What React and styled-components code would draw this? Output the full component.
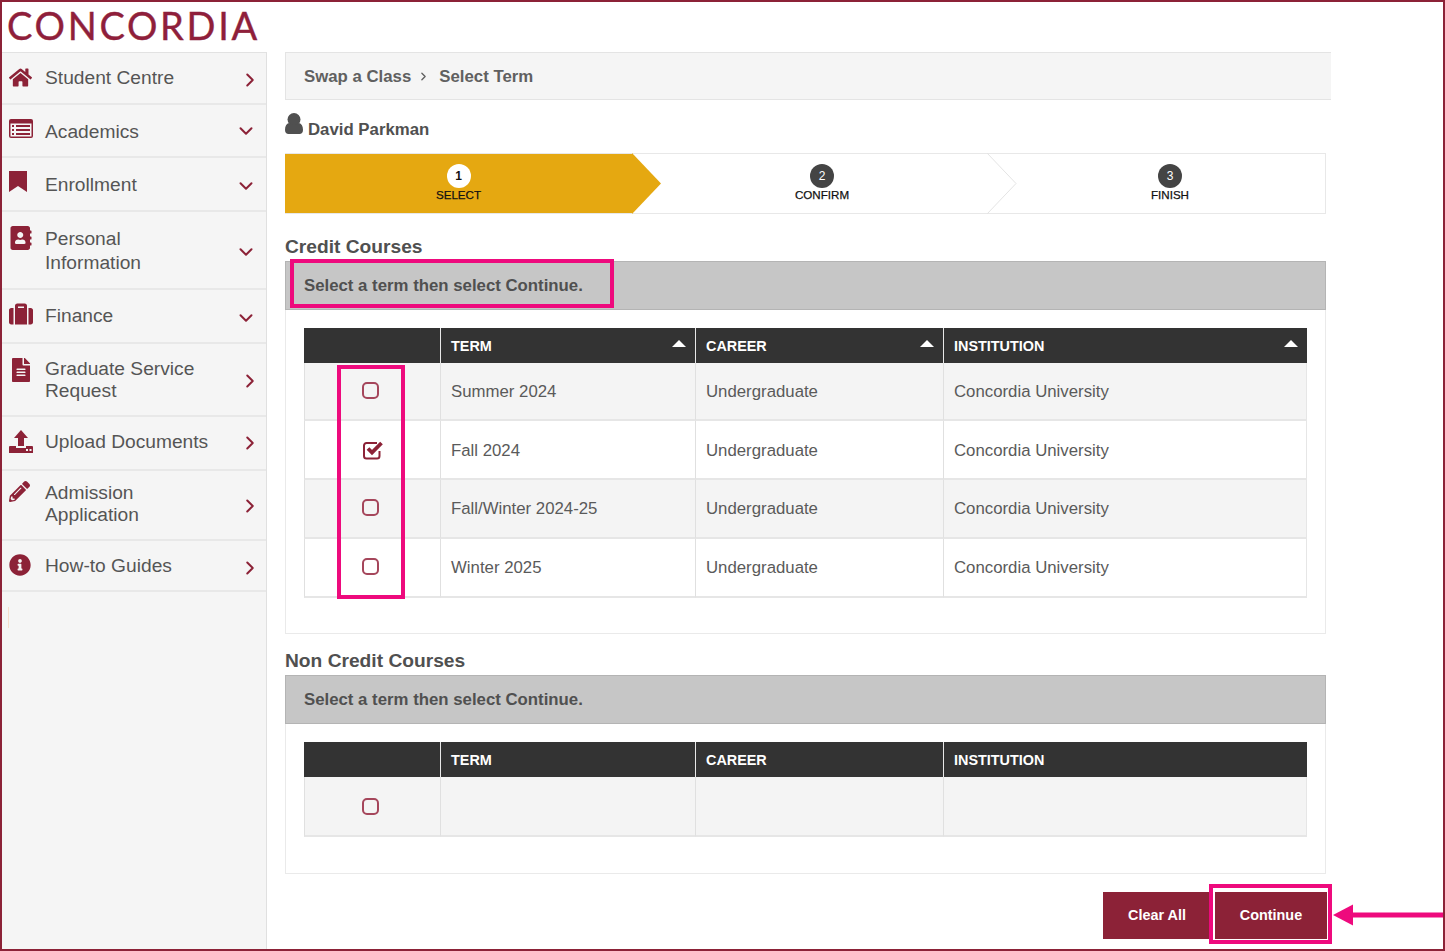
import React from "react";
import styled, { createGlobalStyle } from "styled-components";
import {
  FaHome,
  FaAddressBook,
  FaSuitcase,
  FaFileAlt,
  FaPencilAlt,
  FaInfoCircle,
} from "react-icons/fa";
import { ChevronRight, ChevronDown } from "lucide-react";

const GlobalStyle = createGlobalStyle`
  html, body {
    margin: 0;
    padding: 0;
    background: #fff;
  }
  body {
    font-family: "Liberation Sans", Arial, sans-serif;
    color: #555;
  }
`;

const Frame = styled.div`
  position: relative;
  box-sizing: border-box;
  width: 1445px;
  height: 951px;
  border: 2px solid #8c2237;
  overflow: hidden;
  background: #fff;
`;

const Header = styled.header`
  height: 50px;
  display: flex;
  align-items: flex-start;
  padding-left: 5px;
`;

const Logo = styled.div`
  font-family: "Lato", sans-serif;
  font-size: 38px;
  line-height: 46px;
  letter-spacing: 2.7px;
  color: #8f1f3b;
  -webkit-text-stroke: 0.4px #8f1f3b;
`;

const Body = styled.div`
  display: flex;
  height: 897px;
`;

const Sidebar = styled.nav`
  box-sizing: border-box;
  width: 265px;
  flex: none;
  background: #f5f5f5;
  border-right: 1px solid #e0e0e0;
  border-top: 1px solid #e2e2e2;
`;

const MenuItem = styled.div`
  box-sizing: border-box;
  height: ${(p) => p.$h}px;
  display: flex;
  align-items: flex-start;
  padding: ${(p) => p.$top}px 11px 0 7px;
  border-bottom: 2px solid #e8e8e8;
  position: relative;
`;

const MenuIcon = styled.span`
  width: 36px;
  flex: none;
  color: #8c2237;
  line-height: 0;
  display: block;
  svg {
    display: block;
    margin-top: ${(p) => p.$shift || 0}px;
  }
`;

const MenuLabel = styled.span`
  flex: 1;
  font-size: 19.2px;
  line-height: ${(p) => p.$lh || 24}px;
  color: #555;
`;

const MenuArrow = styled.span`
  position: absolute;
  right: ${(p) => (p.$right ? 5 : 9)}px;
  top: ${(p) => p.$top}px;
  color: #8c2237;
  line-height: 0;
`;

const Tick = styled.div`
  width: 1px;
  height: 21px;
  margin: 15px 0 0 6px;
  background: #f6dfcd;
`;

const Main = styled.main`
  flex: 1;
  padding-left: 18px;
  position: relative;
`;

const Breadcrumb = styled.div`
  box-sizing: border-box;
  width: 1046px;
  height: 48px;
  display: flex;
  align-items: center;
  padding: 1px 0 0 18px;
  background: #f5f5f5;
  border: 1px solid #e4e4e4;
  border-right: none;
  font-size: 16.8px;
  font-weight: bold;
  color: #606060;
`;

const Crumb = styled.span`
  margin-right: ${(p) => p.$gap}px;
`;

const CrumbArrow = styled(ChevronRight)`
  display: block;
  margin-right: 9px;
`;

const Student = styled.div`
  height: 53px;
  display: flex;
  align-items: flex-start;
  padding-top: 13px;
  box-sizing: border-box;
  font-size: 16.8px;
  font-weight: bold;
  color: #505050;
`;

const StudentIcon = styled.svg`
  display: block;
  flex: none;
  margin-right: 5px;
`;

const StudentName = styled.span`
  line-height: 20px;
  margin-top: 7px;
`;

const Stepper = styled.div`
  box-sizing: border-box;
  width: 1041px;
  height: 61px;
  display: flex;
  border: 1px solid #e8e8e8;
  border-left: none;
`;

const Step = styled.div`
  width: ${(p) => p.$w}px;
  flex: none;
  display: flex;
  flex-direction: column;
  align-items: center;
  padding: 10px ${(p) => p.$pr || 0}px 0 0;
  box-sizing: border-box;
  background: ${(p) => (p.$active ? "#e5a811" : "transparent")};
`;

const StepNum = styled.span`
  width: 24px;
  height: 24px;
  border-radius: 50%;
  display: flex;
  align-items: center;
  justify-content: center;
  font-size: 12px;
  font-weight: ${(p) => (p.$active ? "bold" : "normal")};
  background: ${(p) => (p.$active ? "#fff" : "#444")};
  color: ${(p) => (p.$active ? "#111" : "#fff")};
`;

const StepLabel = styled.span`
  font-size: 11.6px;
  line-height: 14px;
  color: #111;
  -webkit-text-stroke: 0.25px #111;
`;

const StepArrow = styled.svg`
  flex: none;
  display: block;
  margin: -1px 0;
`;

const SectionTitle = styled.h2`
  margin: 0;
  padding: ${(p) => p.$top}px 0 3px;
  font-size: 19.2px;
  line-height: 22px;
  font-weight: bold;
  color: #505050;
`;

const Panel = styled.section`
  box-sizing: border-box;
  width: 1041px;
  height: ${(p) => p.$h}px;
  border: 1px solid #eaeaea;
  border-top: none;
`;

const PanelHead = styled.div`
  box-sizing: border-box;
  height: 49px;
  margin: 0 -1px;
  display: flex;
  align-items: center;
  padding-left: 18px;
  background: #c6c6c6;
  border: 1px solid #b4b4b4;
  font-size: 16.8px;
  font-weight: bold;
  color: #505050;
`;

const Table = styled.table`
  border-collapse: separate;
  border-spacing: 0;
  table-layout: fixed;
  width: 1003px;
  margin: 18px 0 0 18px;
  font-size: 16.8px;
`;

const Th = styled.th`
  box-sizing: border-box;
  height: 34.5px;
  padding: 1px 0 0 10px;
  background: #333;
  color: #fff;
  font-size: 14.4px;
  font-weight: bold;
  text-align: left;
  position: relative;
  border-left: ${(p) => (p.$first ? "none" : "1px solid #e8e8e8")};
`;

const SortMark = styled.span`
  position: absolute;
  right: 9px;
  top: 12px;
  width: 0;
  height: 0;
  border-left: 7px solid transparent;
  border-right: 7px solid transparent;
  border-bottom: 7px solid #fff;
`;

const Row = styled.tr`
  background: ${(p) => (p.$odd ? "#f4f4f4" : "#fff")};
`;

const Td = styled.td`
  box-sizing: border-box;
  height: ${(p) => p.$h}px;
  padding: 2px 0 0 10px;
  color: #5a5a5a;
  border-bottom: 2px solid #e6e6e6;
  border-left: 1px solid #e0e0e0;
`;

const LastTd = styled(Td)`
  border-right: 1px solid #e6e6e6;
`;

const CheckTd = styled(Td)`
  padding-left: 57px;
`;

const Box = styled.span`
  display: block;
  box-sizing: border-box;
  width: 17px;
  height: 17px;
  border: 2px solid #a5465b;
  border-radius: 5px;
  margin-top: ${(p) => (p.$single ? -1 : -3)}px;
`;

const CheckIcon = styled.svg`
  display: block;
  margin-top: -1px;
`;

const Actions = styled.div`
  width: 1042px;
  display: flex;
  justify-content: flex-end;
  margin-top: 18px;
`;

const Button = styled.button`
  box-sizing: border-box;
  height: 47px;
  width: ${(p) => p.$w}px;
  margin-left: ${(p) => p.$gap || 0}px;
  padding: 0 0 2px;
  background: #8c2237;
  color: #fff;
  border: none;
  font-family: "Liberation Sans", Arial, sans-serif;
  font-size: 14.4px;
  font-weight: bold;
`;

/* the pink call-outs lie over the page */
const Callout = styled.div`
  position: absolute;
  box-sizing: border-box;
  left: ${(p) => p.$x}px;
  top: ${(p) => p.$y}px;
  width: ${(p) => p.$w}px;
  height: ${(p) => p.$h}px;
  border: 4px solid #ee0a7d;
`;

const ContinueRing = styled(Callout)`
  box-shadow: inset 0 0 0 1px #fff;
`;

const ArrowMark = styled.svg`
  position: absolute;
  left: 1330px;
  top: 899px;
`;

const ListIcon = () => (
  <svg width="24" height="19" viewBox="0 0 24 19">
    <rect width="24" height="19" rx="2" fill="currentColor" />
    <rect x="1.500" y="4.500" width="21" height="13" fill="#f5f5f5" />
    <path d="M3 6h2v2H3zM7 6h14v2H7zM3 10h2v2H3zM7 10h14v2H7zM3 14h2v2H3zM7 14h14v2H7z" fill="currentColor" />
  </svg>
);

const BookmarkIcon = () => (
  <svg width="18" height="21" viewBox="0 0 18 21">
    <path d="M0 0h18v21l-9-6-9 6z" fill="currentColor" />
  </svg>
);

const UploadIcon = () => (
  <svg width="24" height="23" viewBox="0 0 24 23">
    <path
      d="M12 0l7 8h-4v8H9V8H5zM0 23v-6a1 1 0 0 1 1-1h6v2h10v-2h6a1 1 0 0 1 1 1v6z"
      fill="currentColor"
    />
    <path d="M17 19h2v2h-2zM20.500 19h2v2h-2z" fill="#f5f5f5" />
  </svg>
);

const menu = [
  { label: ["Student Centre"], icon: <FaHome size={23} />, h: 52, top: 13, shift: 0, right: true, at: 17 },
  { label: ["Academics"], icon: <ListIcon />, h: 53, top: 15, shift: -1, at: 16 },
  { label: ["Enrollment"], icon: <BookmarkIcon />, h: 54, top: 15, shift: -2, at: 18 },
  { label: ["Personal", "Information"], icon: <FaAddressBook size={24} />, h: 78, top: 15, shift: -1, at: 30 },
  { label: ["Finance"], icon: <FaSuitcase size={24} />, h: 54, top: 14, shift: -2, at: 18 },
  { label: ["Graduate Service", "Request"], icon: <FaFileAlt size={24} />, h: 73, top: 14, lh: 22, right: true, at: 27 },
  { label: ["Upload Documents"], icon: <UploadIcon />, h: 54, top: 13, right: true, at: 16 },
  { label: ["Admission", "Application"], icon: <FaPencilAlt size={21} />, h: 70, top: 11, shift: -1, lh: 21.5, right: true, at: 25 },
  { label: ["How-to Guides"], icon: <FaInfoCircle size={22} />, h: 51, top: 13, right: true, at: 17 },
];

const credit = ["Summer 2024", "Fall 2024", "Fall/Winter 2024-25", "Winter 2025"];

function Check() {
  return (
    <CheckIcon width="22" height="20" viewBox="0 0 22 20">
      <path
        d="M17.500 11v5a2.500 2.500 0 0 1-2.500 2.500H4.500A2.500 2.500 0 0 1 2 16V5.500A2.500 2.500 0 0 1 4.500 3H15"
        fill="none"
        stroke="#8c2237"
        strokeWidth="2"
      />
      <path d="M6 8.500l4 4L19.500 3" fill="none" stroke="#8c2237" strokeWidth="3.800" />
    </CheckIcon>
  );
}

function CourseTable({ rows, sortable, rowH }) {
  return (
    <Table>
      <colgroup>
        <col width="136" />
        <col width="255" />
        <col width="248" />
        <col width="364" />
      </colgroup>
      <thead>
        <tr>
          <Th $first />
          <Th>TERM{sortable && <SortMark />}</Th>
          <Th>CAREER{sortable && <SortMark />}</Th>
          <Th>INSTITUTION{sortable && <SortMark />}</Th>
        </tr>
      </thead>
      <tbody>
        {rows.map((term, i) => (
          <Row key={i} $odd={i % 2 === 0}>
            <CheckTd $h={rowH}>
              {term === "Fall 2024" ? <Check /> : <Box $single={!term} />}
            </CheckTd>
            <Td $h={rowH}>{term}</Td>
            <Td $h={rowH}>{term && "Undergraduate"}</Td>
            <LastTd $h={rowH}>{term && "Concordia University"}</LastTd>
          </Row>
        ))}
      </tbody>
    </Table>
  );
}

export default function App() {
  return (
    <Frame>
      <GlobalStyle />
      <Header>
        <Logo>CONCORDIA</Logo>
      </Header>
      <Body>
        <Sidebar>
          {menu.map((m) => (
            <MenuItem key={m.label[0]} $h={m.h} $top={m.top}>
              <MenuIcon $shift={m.shift}>{m.icon}</MenuIcon>
              <MenuLabel $lh={m.lh}>
                {m.label.map((line) => (
                  <div key={line}>{line}</div>
                ))}
              </MenuLabel>
              <MenuArrow $top={m.at - 1} $right={m.right}>
                {m.right ? <ChevronRight size={22} strokeWidth={2.2} /> : <ChevronDown size={22} strokeWidth={2.2} />}
              </MenuArrow>
            </MenuItem>
          ))}
          <Tick />
        </Sidebar>
        <Main>
          <Breadcrumb>
            <Crumb $gap={6}>Swap a Class</Crumb>
            <CrumbArrow size={13} strokeWidth={2.5} />
            <Crumb>Select Term</Crumb>
          </Breadcrumb>
          <Student>
            <StudentIcon width="18" height="21" viewBox="0 0 18 21">
              <circle cx="9" cy="6.500" r="6.500" fill="#505050" />
              <path
                d="M0 17c0-4 1.500-6.500 4-7 1.500 1 3 1.500 5 1.500s3.500-.5 5-1.500c2.500.5 4 3 4 7 0 2.500-1.500 4-3.500 4h-11C1.500 21 0 19.500 0 17z"
                fill="#505050"
              />
            </StudentIcon>
            <StudentName>David Parkman</StudentName>
          </Student>
          <Stepper>
            <Step $w={347} $active>
              <StepNum $active>1</StepNum>
              <StepLabel>SELECT</StepLabel>
            </Step>
            <StepArrow width="29" height="61" viewBox="0 0 29 61">
              <path d="M0 0L29 30.500L0 61z" fill="#e5a811" />
            </StepArrow>
            <Step $w={326} $pr={4}>
              <StepNum>2</StepNum>
              <StepLabel>CONFIRM</StepLabel>
            </Step>
            <StepArrow width="30" height="61" viewBox="0 0 30 61">
              <path d="M0 0L29 30.500L0 61" fill="none" stroke="#e4e4e4" />
            </StepArrow>
            <Step $w={308} $pr={2}>
              <StepNum>3</StepNum>
              <StepLabel>FINISH</StepLabel>
            </Step>
          </Stepper>
          <SectionTitle $top={22}>Credit Courses</SectionTitle>
          <Panel $h={373}>
            <PanelHead>Select a term then select Continue.</PanelHead>
            <CourseTable rows={credit} sortable rowH={58.75} />
          </Panel>
          <SectionTitle $top={16}>Non Credit Courses</SectionTitle>
          <Panel $h={199}>
            <PanelHead>Select a term then select Continue.</PanelHead>
            <CourseTable rows={[""]} rowH={60} />
          </Panel>
          <Actions>
            <Button $w={108}>Clear All</Button>
            <Button $w={112} $gap={4}>Continue</Button>
          </Actions>
        </Main>
      </Body>
      <Callout $x={288} $y={257} $w={324} $h={49} />
      <Callout $x={335} $y={363} $w={68} $h={234} />
      <ContinueRing $x={1207} $y={882} $w={123} $h={60} />
      <ArrowMark width="113" height="28" viewBox="0 0 113 28">
        <path d="M113 14H18" stroke="#ee0a7d" strokeWidth="5" />
        <path d="M1 14L21 3.500V24.500z" fill="#ee0a7d" />
      </ArrowMark>
    </Frame>
  );
}
